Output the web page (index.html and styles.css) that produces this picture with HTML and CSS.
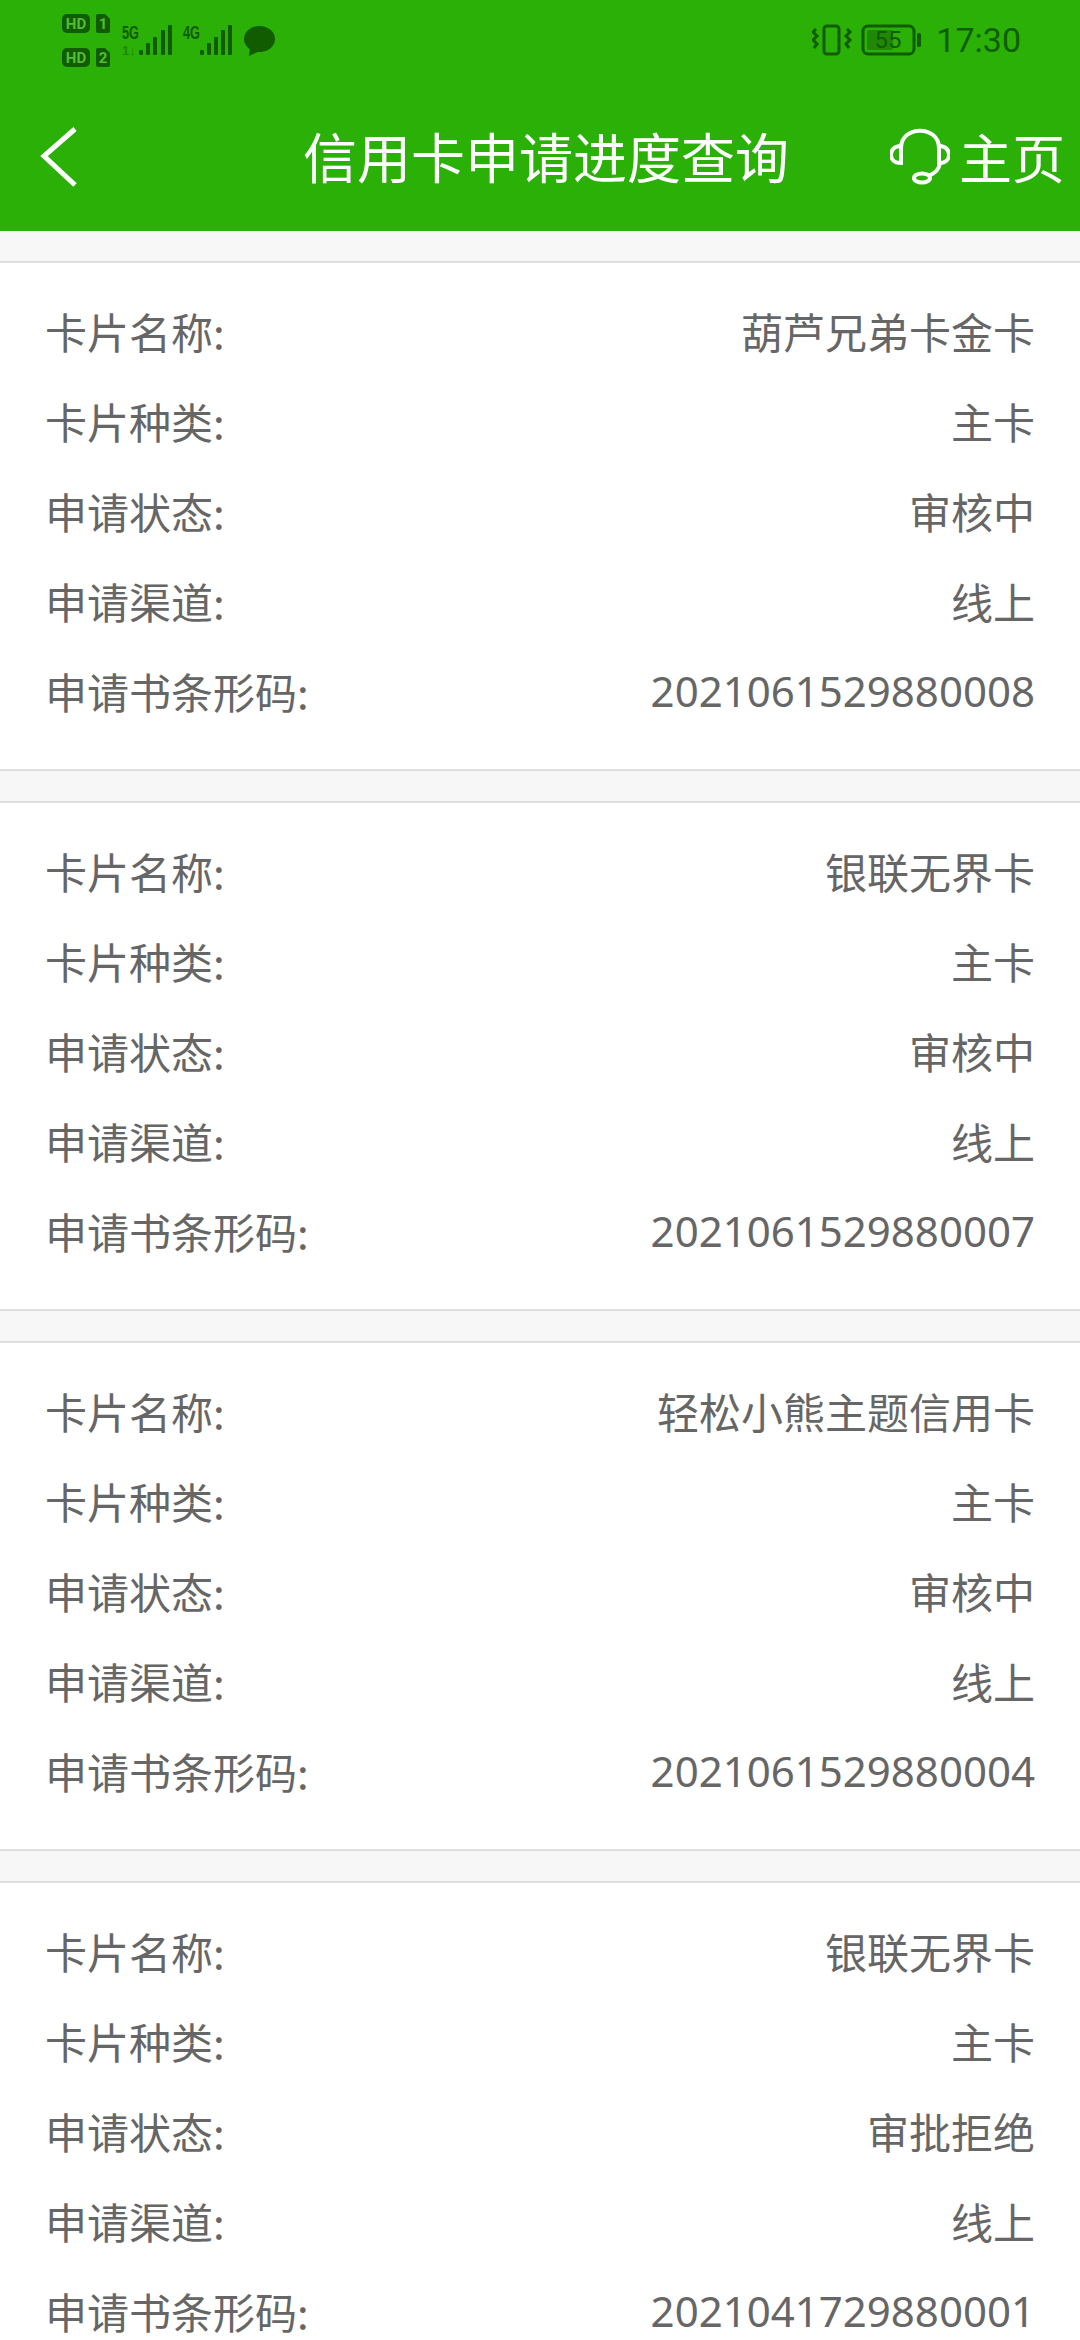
FILE: index.html
```html
<!DOCTYPE html>
<html lang="zh">
<head>
    <meta charset="UTF-8">
    <meta name="viewport" content="width=device-width, initial-scale=1.0">
    <title>信用卡申请进度查询</title>
    <link rel="stylesheet" href="styles.css">
</head>
<body>
    <div class="header">
        <div class="statusbar">
            <svg class="status-left" width="240" height="80" viewBox="62 0 240 80">
                <rect x="62" y="14" width="28" height="19" rx="5" class="dark"/>
                <text x="76" y="29" class="hd">HD</text>
                <path d="M98 14h7l5 5v12a2 2 0 0 1-2 2h-10a2 2 0 0 1-2-2v-15a2 2 0 0 1 2-2z" class="dark"/>
                <text x="103" y="29" class="hd">1</text>
                <rect x="62" y="48" width="28" height="19" rx="5" class="dark"/>
                <text x="76" y="63" class="hd">HD</text>
                <path d="M98 48h7l5 5v12a2 2 0 0 1-2 2h-10a2 2 0 0 1-2-2v-15a2 2 0 0 1 2-2z" class="dark"/>
                <text x="103" y="63" class="hd">2</text>
                <text x="122" y="39" class="net" textLength="17" lengthAdjust="spacingAndGlyphs">5G</text>
                <text x="122" y="55" class="net-faint">1↓</text>
                <rect x="139" y="50" width="4" height="5" rx="1" class="dark"/>
                <rect x="146" y="43" width="4" height="12" rx="1" class="dark"/>
                <rect x="153" y="37" width="4" height="18" rx="1" class="dark"/>
                <rect x="161" y="30" width="4" height="25" rx="1" class="dark"/>
                <rect x="168" y="25" width="4" height="30" rx="1" class="dark"/>
                <text x="183" y="39" class="net" textLength="17" lengthAdjust="spacingAndGlyphs">4G</text>
                <rect x="200" y="50" width="4" height="5" rx="1" class="dark"/>
                <rect x="207" y="43" width="4" height="12" rx="1" class="dark"/>
                <rect x="214" y="37" width="4" height="18" rx="1" class="dark"/>
                <rect x="221" y="30" width="4" height="25" rx="1" class="dark"/>
                <rect x="228" y="25" width="4" height="30" rx="1" class="dark"/>
                <ellipse cx="259.500" cy="39" rx="15.500" ry="13" class="dark"/>
                <path d="M250 47l-1 9l11-5z" class="dark"/>
            </svg>
            <div class="status-right">
                <svg width="110" height="40" viewBox="812 20 110 40">
                    <rect x="824" y="26" width="15" height="28" rx="3" class="line"/>
                    <path d="M816 29l-3 3l4 4l-4 4l4 4l-3 4M847 29l3 3l-4 4l4 4l-4 4l3 4" class="line"/>
                    <rect x="863" y="26" width="51" height="28" rx="5" class="line"/>
                    <rect x="867" y="30" width="26" height="20" rx="2" class="batt-fill"/>
                    <text x="888" y="48" class="batt-num">55</text>
                    <rect x="917" y="33" width="4" height="14" rx="1.500" class="dark"/>
                </svg>
                <span class="time">17:30</span>
            </div>
        </div>
        <div class="navbar">
            <svg class="back" width="50" height="70" viewBox="0 0 50 70">
                <path d="M37 8L6 35L37 64" fill="none" stroke="#fff" stroke-width="5"/>
            </svg>
            <div class="nav-title">信用卡申请进度查询</div>
            <div class="nav-home">
                <svg width="60" height="60" viewBox="0 0 60 60">
                    <g fill="none" stroke="#fff" stroke-width="4">
                        <path d="M11 22C11 -1 49 -1 49 22"/>
                        <path d="M11 20C2 20 1 27 1 29C1 32 3 37 11 37Z"/>
                        <path d="M49 20C58 20 59 27 59 29C59 32 57 37 49 37Z"/>
                        <path d="M50 37C49 44 44 48 38 50"/>
                        <ellipse cx="32" cy="52" rx="8" ry="4.500"/>
                    </g>
                </svg>
                <span>主页</span>
            </div>
        </div>
    </div>
    <div class="container">
        <div class="card">
            <div class="row"><span>卡片名称:</span><span>葫芦兄弟卡金卡</span></div>
            <div class="row"><span>卡片种类:</span><span>主卡</span></div>
            <div class="row"><span>申请状态:</span><span>审核中</span></div>
            <div class="row"><span>申请渠道:</span><span>线上</span></div>
            <div class="row"><span>申请书条形码:</span><span class="code">2021061529880008</span></div>
        </div>
        <div class="card">
            <div class="row"><span>卡片名称:</span><span>银联无界卡</span></div>
            <div class="row"><span>卡片种类:</span><span>主卡</span></div>
            <div class="row"><span>申请状态:</span><span>审核中</span></div>
            <div class="row"><span>申请渠道:</span><span>线上</span></div>
            <div class="row"><span>申请书条形码:</span><span class="code">2021061529880007</span></div>
        </div>
        <div class="card">
            <div class="row"><span>卡片名称:</span><span>轻松小熊主题信用卡</span></div>
            <div class="row"><span>卡片种类:</span><span>主卡</span></div>
            <div class="row"><span>申请状态:</span><span>审核中</span></div>
            <div class="row"><span>申请渠道:</span><span>线上</span></div>
            <div class="row"><span>申请书条形码:</span><span class="code">2021061529880004</span></div>
        </div>
        <div class="card">
            <div class="row"><span>卡片名称:</span><span>银联无界卡</span></div>
            <div class="row"><span>卡片种类:</span><span>主卡</span></div>
            <div class="row"><span>申请状态:</span><span>审批拒绝</span></div>
            <div class="row"><span>申请渠道:</span><span>线上</span></div>
            <div class="row"><span>申请书条形码:</span><span class="code">2021041729880001</span></div>
        </div>
    </div>
</body>
</html>
```

FILE: styles.css
```css
html {
    overflow: hidden;
}
body {
    margin: 0;
    height: 2340px;
    overflow: hidden;
    background-color: #f7f7f7;
    font-family: "Noto Sans CJK SC", "Noto Sans", sans-serif;
}
.header {
    background-color: #2ab007;
    height: 231px;
}
.statusbar {
    height: 80px;
    display: flex;
    justify-content: space-between;
    padding: 0 59px 0 62px;
}
.status-right {
    display: flex;
    align-items: center;
    gap: 14px;
}
.status-right svg {
    display: block;
}
.time {
    font-family: Roboto, sans-serif;
    font-size: 34px;
    color: #0f5f00;
}
.dark {
    fill: #125c00;
}
.line {
    fill: none;
    stroke: #125c00;
    stroke-width: 3;
}
.batt-fill {
    fill: #1f8806;
}
.batt-num {
    fill: #125c00;
    font-family: Roboto, sans-serif;
    font-size: 24px;
    text-anchor: middle;
}
.hd {
    fill: #52bd32;
    font-family: Roboto, sans-serif;
    font-size: 15px;
    font-weight: 700;
    text-anchor: middle;
}
.net {
    fill: #125c00;
    font-family: "Liberation Sans", sans-serif;
    font-size: 18px;
    font-weight: 700;
}
.net-faint {
    fill: #1f8806;
    font-family: "Liberation Sans", sans-serif;
    font-size: 13px;
    font-weight: 700;
}
.navbar {
    height: 151px;
    display: grid;
    grid-template-columns: 1fr auto 1fr;
    align-items: center;
    padding-left: 12px;
    color: #fff;
}
.back {
    display: block;
    margin-left: 26px;
}
.nav-title {
    font-size: 54px;
    line-height: 70px;
}
.nav-home {
    display: flex;
    align-items: center;
    justify-content: flex-end;
    gap: 9px;
    padding-right: 15px;
    font-size: 53px;
    line-height: 70px;
}
.container {
    display: flex;
    flex-direction: column;
    gap: 30px;
    padding-top: 30px;
}
.card {
    background-color: #fff;
    border-top: 2px solid #dedede;
    border-bottom: 2px solid #dedede;
    padding: 28px 45px 28px 45px;
}
.row {
    height: 79px;
    padding-bottom: 11px;
    display: flex;
    align-items: center;
    justify-content: space-between;
    font-size: 42px;
    color: #666;
}
.code {
    font-family: "Noto Sans", sans-serif;
}
```
